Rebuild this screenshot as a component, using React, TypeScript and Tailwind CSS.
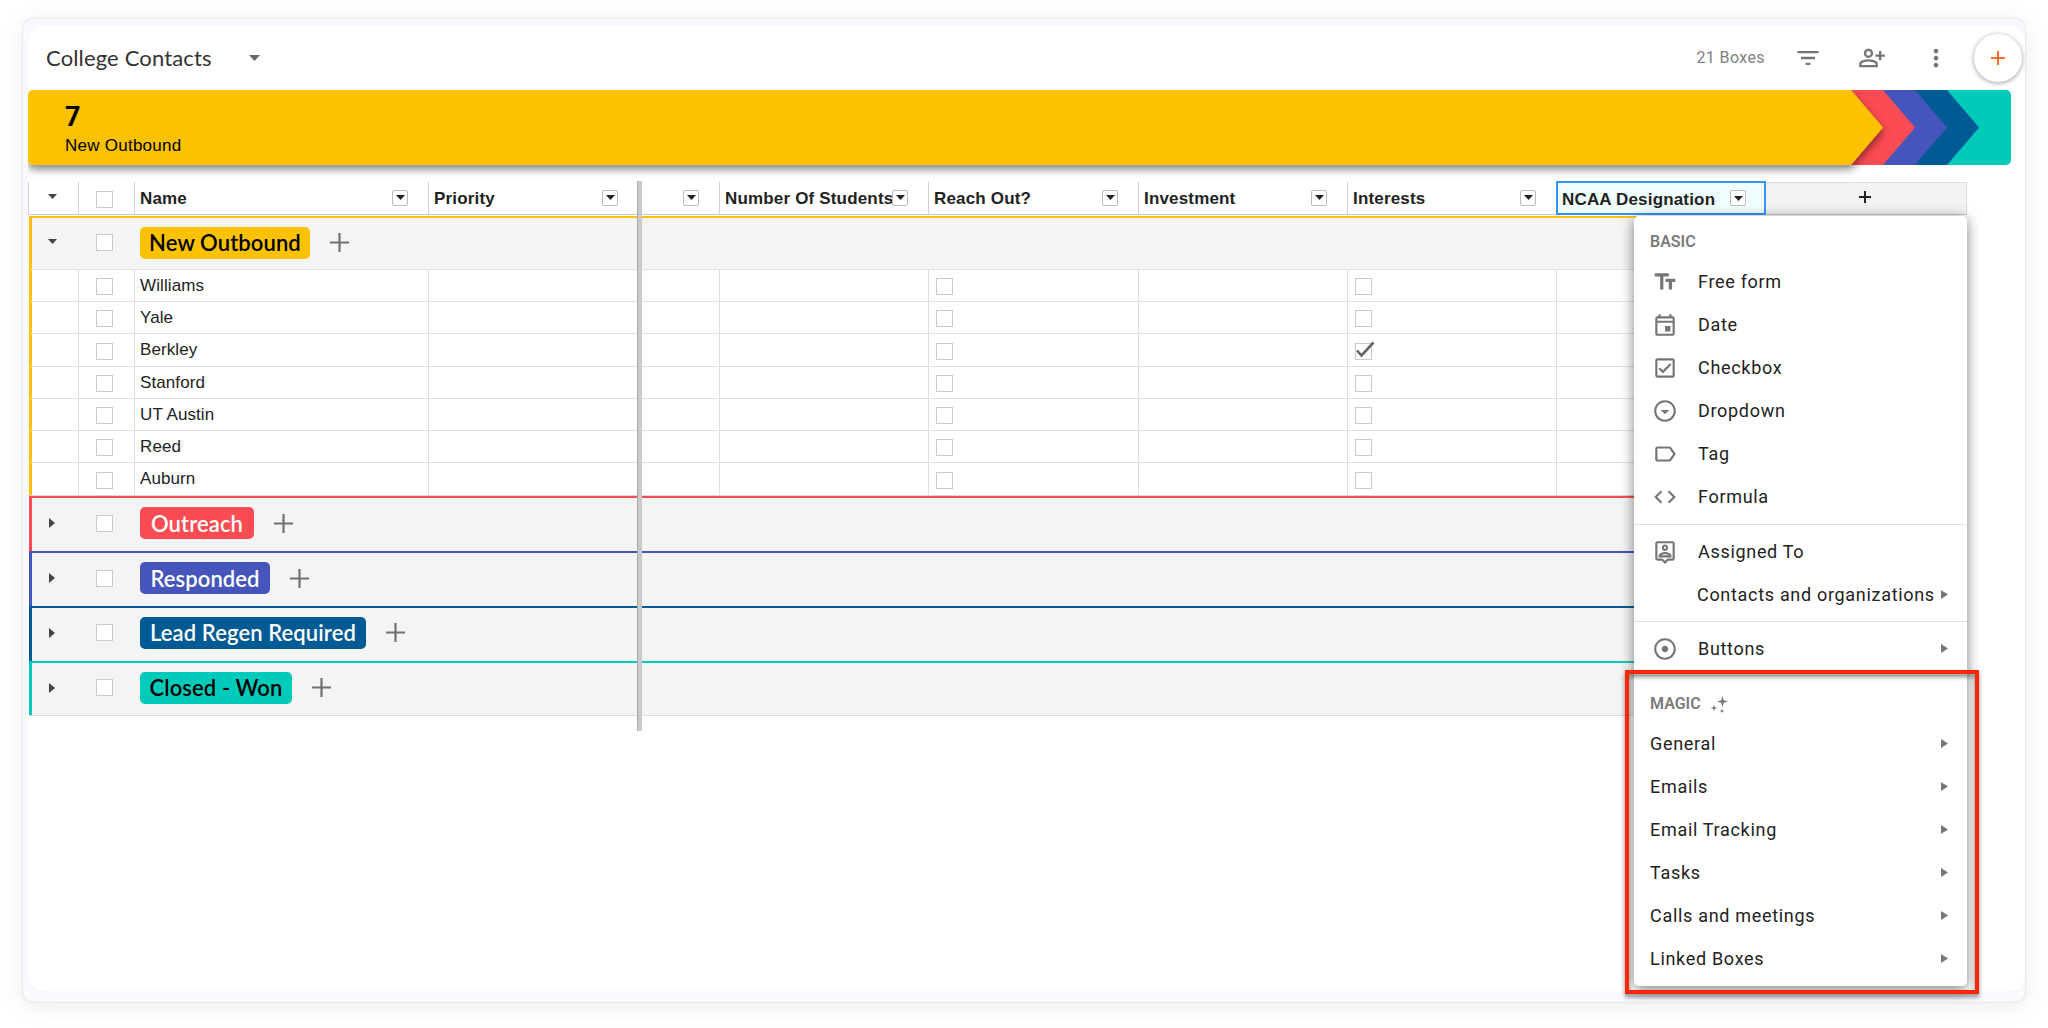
import { ReactNode } from 'react';
import {
  MdAdjust,
  MdCode,
  MdFilterList,
  MdLabelOutline,
  MdMoreVert,
  MdOutlineArrowDropDownCircle,
  MdOutlineCheckBox,
  MdOutlineEvent,
  MdOutlinePersonAddAlt,
  MdOutlinePersonPin,
  MdTextFields,
} from 'react-icons/md';

const COLUMNS = [
  { label: 'Number Of Students', width: 'w-[209px]' },
  { label: 'Reach Out?', width: 'w-[210px]', checkbox: true },
  { label: 'Investment', width: 'w-[209px]' },
  { label: 'Interests', width: 'w-[209px]', checkbox: true },
];

const CONTACTS = [
  { name: 'Williams', height: 'h-[32px]' },
  { name: 'Yale', height: 'h-[32px]' },
  { name: 'Berkley', height: 'h-[33px]', interested: true },
  { name: 'Stanford', height: 'h-[32px]' },
  { name: 'UT Austin', height: 'h-[32px]' },
  { name: 'Reed', height: 'h-[32px]' },
  { name: 'Auburn', height: 'h-[33px]' },
];

const STAGES = [
  { name: 'Outreach', border: 'border-[#fb4b53]', tag: 'w-[114px] bg-[#fb4b53] text-white', height: 'h-[55px] pb-[3px]' },
  { name: 'Responded', border: 'border-[#4655bc]', tag: 'w-[130px] bg-[#4655bc] text-white', height: 'h-[55px] pb-[3px]' },
  { name: 'Lead Regen Required', border: 'border-[#005b94]', tag: 'w-[226px] bg-[#005b94] text-white', height: 'h-[55px] pb-1' },
  { name: 'Closed - Won', border: 'border-[#00cbba]', tag: 'w-[152px] bg-[#00cbba] text-black', height: 'h-[54px] pb-[3px]' },
];

const BASIC_ITEMS = [
  { label: 'Free form', icon: MdTextFields },
  { label: 'Date', icon: MdOutlineEvent },
  { label: 'Checkbox', icon: MdOutlineCheckBox },
  { label: 'Dropdown', icon: MdOutlineArrowDropDownCircle },
  { label: 'Tag', icon: MdLabelOutline },
  { label: 'Formula', icon: MdCode },
];

const MAGIC_ITEMS = ['General', 'Emails', 'Email Tracking', 'Tasks', 'Calls and meetings', 'Linked Boxes'];

function Caret({ className }: { className: string }) {
  return (
    <svg className={className} viewBox="0 0 10 6" preserveAspectRatio="none" fill="currentColor">
      <path d="M0 0h10L5 6z" />
    </svg>
  );
}

function RightCaret({ className }: { className: string }) {
  return (
    <svg className={className} viewBox="0 0 6 10" preserveAspectRatio="none" fill="currentColor">
      <path d="M0 0v10l6-5z" />
    </svg>
  );
}

function Box({ checked }: { checked?: boolean }) {
  return (
    <span className="relative block size-[17px] shrink-0 border border-[#cacaca] bg-white">
      {checked && (
        <svg className="absolute -top-[3px] left-0 h-[17px] w-[19px] text-[#666]" viewBox="0 0 19 17" fill="none" stroke="currentColor" strokeWidth="2.6">
          <path d="M1 9.5l4.5 5L17.5 1.5" />
        </svg>
      )}
    </span>
  );
}

function MenuButton() {
  return (
    <span className="flex size-4 shrink-0 items-center justify-center rounded-[2px] border border-[#bdbdbd] bg-white text-[#222]">
      <Caret className="h-[5px] w-[9px]" />
    </span>
  );
}

function HeaderCell({ label, width }: { label: string; width: string }) {
  return (
    <div className={`flex items-center border-l border-[#d0d0d0] pb-px pr-5 ${width}`}>
      <span className="w-0 flex-1 whitespace-nowrap pl-[5px] pt-[3px]">{label}</span>
      <MenuButton />
    </div>
  );
}

function StageRow({ name, tag, border, height, open }: { name: string; tag: string; border: string; height: string; open?: boolean }) {
  return (
    <div className={`ml-px flex items-center border-l-[3px] border-t-2 bg-[#f4f4f4] shadow-[0_1px_0_#dcdcdc] ${border} ${height}`}>
      <div className="flex w-[64px] pl-[16px] text-[#444]">
        {open ? <Caret className="mb-0.5 h-[5px] w-[9px]" /> : <RightCaret className="ml-px h-2.5 w-[6px]" />}
      </div>
      <Box />
      <span className={`ml-[27px] flex h-8 shrink-0 items-center justify-center whitespace-nowrap rounded-[5px] font-[Lato] text-[22px] font-semibold ${tag}`}>
        {name}
      </span>
      <svg className="ml-5 size-[19px] text-[#707070]" viewBox="0 0 19 19" stroke="currentColor" strokeWidth="2.2">
        <path d="M9.5 0v19M0 9.5h19" />
      </svg>
    </div>
  );
}

function MenuItem({ icon, label, arrow, className = '' }: { icon?: ReactNode; label: string; arrow?: boolean; className?: string }) {
  return (
    <li className={`flex h-[43px] items-center pl-4 pr-[19px] ${className}`}>
      {icon}
      <span className="w-0 flex-1 whitespace-nowrap">{label}</span>
      {arrow && <RightCaret className="h-[9px] w-[7px] text-[#777]" />}
    </li>
  );
}

function ColumnMenu() {
  const iconClass = 'mr-5 ml-0.5 size-[26px] shrink-0 text-[#757575]';

  return (
    <div className="absolute left-[1634px] top-[216px] h-[770px] w-[333px] rounded-[5px] bg-white font-[Roboto] text-[18px] tracking-[0.69px] text-[#222] shadow-[0_3px_14px_rgba(0,0,0,0.5)]">
      <div className="flex h-11 items-center pl-4 pt-2 text-[16px] font-semibold tracking-normal text-[#7a7a7a]">BASIC</div>
      <ul>
        {BASIC_ITEMS.map(({ label, icon: Icon }) => (
          <MenuItem key={label} label={label} icon={<Icon className={iconClass} />} />
        ))}
      </ul>
      <ul className="mt-1.5 border-t border-[#dedede] pt-[5px]">
        <MenuItem label="Assigned To" icon={<MdOutlinePersonPin className={iconClass} />} />
        <MenuItem label="Contacts and organizations" arrow className="!pl-[63px]" />
      </ul>
      <ul className="mt-[5px] border-t border-[#dedede] pt-[5px]">
        <MenuItem label="Buttons" arrow icon={<MdAdjust className={iconClass} />} />
      </ul>
      <div className="mt-[5px] flex h-[47px] items-center border-t border-[#dedede] pl-4 pt-2.5 text-[16px] font-semibold tracking-normal text-[#7a7a7a]">
        MAGIC
        <svg className="ml-[10px] size-[17px]" viewBox="0 0 17 17" fill="currentColor">
          <path d="M11.5 0l1.3 4.2L17 5.5l-4.2 1.3L11.5 11l-1.3-4.2L6 5.5l4.2-1.3zM3 8.5l.8 2.7 2.7.8-2.7.8L3 15.5l-.8-2.7L-.5 12l2.7-.8zM11 13l.7 1.3L13 15l-1.3.7L11 17l-.7-1.3L9 15l1.3-.7z" />
        </svg>
      </div>
      <ul>
        {MAGIC_ITEMS.map((label) => (
          <MenuItem key={label} label={label} arrow />
        ))}
      </ul>
    </div>
  );
}

function TopBar() {
  return (
    <header className="flex h-16 items-center pl-[19px] font-[Roboto]">
      <h1 className="w-[166px] whitespace-nowrap pb-0.5 font-[Lato] text-[22px] tracking-[0.15px] text-[#333] -indent-px">College Contacts</h1>
      <Caret className="ml-9 h-[6px] w-[11px] text-[#666]" />
      <span className="ml-auto text-[16px] tracking-[0.4px] text-[#808080]">21 Boxes</span>
      <MdFilterList className="ml-[29px] size-7 text-[#757575]" />
      <MdOutlinePersonAddAlt className="ml-9 size-7 text-[#757575]" />
      <MdMoreVert className="ml-9 size-7 text-[#757575]" />
      <button className="ml-6 mr-[3px] flex size-12 items-center justify-center rounded-full bg-white shadow-[0_1px_5px_rgba(0,0,0,0.4)]" aria-label="Add box">
        <svg className="size-[14px] text-[#ff6d2d]" viewBox="0 0 14 14" stroke="currentColor" strokeWidth="2">
          <path d="M7 0v14M0 7h14" />
        </svg>
      </button>
    </header>
  );
}

function StageBanner() {
  return (
    <div className="relative h-[75px] w-[1983px]">
      <svg className="absolute left-0 top-0 h-[95px] w-[1983px]" viewBox="0 0 1983 95">
        <defs>
          <filter id="stageShadow" x="-1%" y="-20%" width="102%" height="160%">
            <feDropShadow dx="0" dy="4" stdDeviation="4" floodOpacity="0.5" />
          </filter>
          <clipPath id="bannerRight">
            <rect x="1800" width="183" height="75" rx="5" />
          </clipPath>
        </defs>
        <g clipPath="url(#bannerRight)">
          <path fill="#00cbba" d="M1900 0h83v75h-83z" />
          <path fill="#005b94" d="M1800 0h119l32 37.5-32 37.5h-119z" />
          <path fill="#4655bc" d="M1800 0h87l32 37.5-32 37.5h-87z" />
          <path fill="#fb4b53" d="M1800 0h55l32 37.5-32 37.5h-55z" />
        </g>
        <path filter="url(#stageShadow)" fill="#fcc200" d="M5 0h1818l32 37.5-32 37.5H5a5 5 0 0 1-5-5V5a5 5 0 0 1 5-5z" />
      </svg>
      <div className="relative pl-[37px] pt-[11px] text-black">
        <div className="font-[Roboto] text-[27px] font-bold leading-8">7</div>
        <div className="pt-px text-[17px] leading-6 tracking-[0.25px]">New Outbound</div>
      </div>
    </div>
  );
}

function ContactGrid() {
  return (
    <div className="relative mt-[17px] text-[17px] tracking-[0.17px] text-[#222]">
      <div className="flex h-[33px] w-[1939px] border-b border-[#c4c9d4] font-bold">
        <div className="flex w-[50px] items-center border-l border-[#d0d0d0] pl-[19px] text-[#444]">
          <Caret className="mb-[3px] h-[5px] w-[9px]" />
        </div>
        <div className="flex w-14 items-center border-l border-[#d0d0d0] pl-[17px] pt-0.5">
          <Box />
        </div>
        <HeaderCell label="Name" width="w-[294px]" />
        <HeaderCell label="Priority" width="w-[210px]" />
        <div className="flex w-[81px] items-center justify-end pb-px pr-5">
          <MenuButton />
        </div>
        {COLUMNS.map((col) => (
          <HeaderCell key={col.label} label={col.label} width={col.width} />
        ))}
        <div className="-mt-px flex h-[34px] w-[210px] items-center border-2 border-[#3496f8] bg-[#f0fffe] pr-[18px]">
          <span className="w-0 flex-1 whitespace-nowrap pl-1 pt-[3px]">NCAA Designation</span>
          <MenuButton />
        </div>
        <div className="flex w-[201px] items-center justify-center border-r border-t border-[#dcdcdc] bg-[#f2f2f2]">
          <svg className="mb-[3px] mr-0.5 size-3" viewBox="0 0 12 12" stroke="#222" strokeWidth="2">
            <path d="M6 0v12M0 6h12" />
          </svg>
        </div>
      </div>

      <div className="w-[1700px] pt-px tracking-[0.1px]">
        <StageRow name="New Outbound" open border="border-[#fcc200]" height="h-[53px] pb-0.5" tag="w-[170px] bg-[#fcc200] text-black" />
        {CONTACTS.map((contact) => (
          <div key={contact.name} className={`ml-px flex border-l-[3px] border-t border-l-[#fcc200] border-t-[#e0e0e0] ${contact.height}`}>
            <div className="w-[46px]" />
            <div className="flex w-14 items-center border-l border-[#dedede] pl-[17px] pt-0.5">
              <Box />
            </div>
            <div className="w-[294px] border-l border-[#dedede] pl-[5px] pt-1 leading-6">{contact.name}</div>
            <div className="w-[291px] border-l border-[#dedede]" />
            {COLUMNS.map((col) => (
              <div key={col.label} className={`flex items-center border-l border-[#dedede] pl-[7px] pt-0.5 ${col.width}`}>
                {col.checkbox && <Box checked={col.label === 'Interests' && contact.interested} />}
              </div>
            ))}
            <div className="flex-1 border-l border-[#dedede]" />
          </div>
        ))}
        <div className="border-t border-[#d8d8d8]">
          {STAGES.map((stage) => (
            <StageRow key={stage.name} {...stage} />
          ))}
        </div>
      </div>

      {/* frozen column divider */}
      <div className="absolute -top-px left-[609px] h-[550px] w-[5px] border-l border-[#a8a8a8] bg-[#cacaca]" />
    </div>
  );
}

export default function App() {
  return (
    <div className="relative h-[1028px] w-[2048px] overflow-hidden bg-white pl-[23px] pt-[19px] font-['Liberation_Sans',Arial,sans-serif]">
      <div className="h-[983px] w-[2002px] rounded-[9px] bg-[#f8f9fe] pl-[5px] pt-[7px] shadow-[0_0_2px_rgba(0,0,0,0.18),0_4px_26px_rgba(0,0,0,0.08)]">
        <main className="h-[965px] rounded-2xl bg-white">
          <TopBar />
          <StageBanner />
          <ContactGrid />
        </main>
      </div>

      <ColumnMenu />
      {/* callout around the magic columns */}
      <div className="absolute left-[1625px] top-[670px] h-[324px] w-[354px] border-4 border-[#ff2600] drop-shadow-[0_3px_2px_rgba(0,0,0,0.45)]" />
    </div>
  );
}
